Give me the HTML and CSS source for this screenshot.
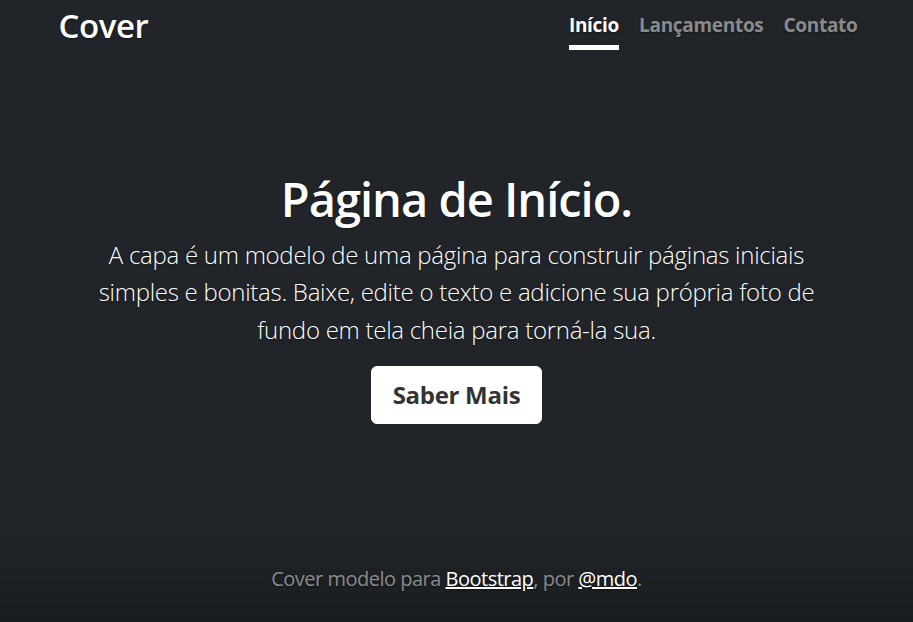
FILE: index.html
```html
<!DOCTYPE html>
<html lang="pt-br">
<head>
<meta charset="utf-8">
<title>Cover</title>
<link rel="stylesheet" href="styles.css">
</head>
<body>
<div class="cover">
  <header class="masthead">
    <h3 class="brand">Cover</h3>
    <nav class="nav">
      <a class="nav-link active" href="#">Início</a>
      <a class="nav-link" href="#">Lançamentos</a>
      <a class="nav-link" href="#">Contato</a>
    </nav>
  </header>
  <main class="hero">
    <h1 class="title">Página de Início.</h1>
    <p class="lead">A capa é um modelo de uma página para construir páginas iniciais simples e bonitas. Baixe, edite o texto e adicione sua própria foto de fundo em tela cheia para torná-la sua.</p>
    <p class="lead-btn"><a href="#" class="btn">Saber Mais</a></p>
  </main>
  <footer class="foot">
    <p>Cover modelo para <a href="#">Bootstrap</a>, por <a href="#">@mdo</a>.</p>
  </footer>
</div>
</body>
</html>
```
FILE: styles.css
```css
html, body {
  height: 100%;
}
body {
  margin: 0;
  background-color: #212529;
  background-image: linear-gradient(to bottom, rgba(0,0,0,0) 0, rgba(0,0,0,0) calc(100% - 110px), rgba(0,0,0,.22) 100%);
  color: #fff;
  font-family: "Open Sans", "Noto Sans", sans-serif;
  font-size: 20px;
  line-height: 1.5;
  text-shadow: 0 1px 2px rgba(0,0,0,.5);
}
.cover {
  box-sizing: border-box;
  display: flex;
  flex-direction: column;
  height: 100%;
  max-width: 840px;
  margin: 0 auto;
  padding: 3px 20px 20px;
}
.masthead {
  display: flex;
  justify-content: space-between;
  align-items: flex-start;
}
.brand {
  margin: 0 0 0 2px;
  font-size: 33px;
  font-weight: 600;
  line-height: 1.2;
  letter-spacing: -0.4px;
  padding-top: 3px;
}
.nav {
  display: flex;
  gap: 20px;
  padding-top: 3px;
  margin-right: -1px;
}
.nav-link {
  display: block;
  padding: 5px 0;
  font-size: 19px;
  font-weight: 700;
  letter-spacing: -0.3px;
  color: rgba(255,255,255,.5);
  text-decoration: none;
  border-bottom: 5px solid transparent;
}
.nav-link.active {
  color: #fff;
  border-bottom-color: #fff;
}
.hero {
  margin: auto 0;
  padding: 0 20px;
  text-align: center;
}
.title {
  margin: 0 0 6px;
  font-size: 47px;
  font-weight: 600;
  line-height: 1.28;
  letter-spacing: -1px;
}
.lead {
  margin: 0 0 18px;
  font-size: 24px;
  font-weight: 300;
  line-height: 37.5px;
  letter-spacing: -0.27px;
}
.lead-btn {
  margin: 0 0 20px;
  font-size: 25px;
}
.btn {
  display: inline-block;
  padding: 10px 21px;
  font-size: 24px;
  font-weight: 700;
  line-height: 36px;
  letter-spacing: -0.3px;
  color: #333;
  background: #fff;
  border: 1px solid #fff;
  border-radius: 6px;
  text-decoration: none;
  text-shadow: none;
}
.foot {
  text-align: center;
  color: rgba(255,255,255,.5);
}
.foot p {
  margin: 0 0 8px;
  letter-spacing: -0.5px;
}
.foot a {
  color: #fff;
}
```
